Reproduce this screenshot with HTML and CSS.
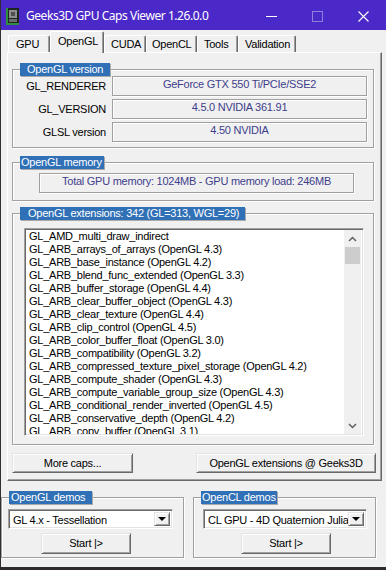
FILE: index.html
```html
<!DOCTYPE html>
<html lang="en">
<head>
  <meta charset="UTF-8">
  <title>Geeks3D GPU Caps Viewer 1.26.0.0</title>
  <link rel="stylesheet" href="styles.css">
</head>
<body>

<div class="window">

  <!-- Barra de titulo -->
  <div class="titlebar">
    <svg class="app-icon" width="13" height="17" viewBox="0 0 13 17">
      <rect x="0" y="0" width="13" height="17" fill="#1e2621"/>
      <rect x="0" y="0" width="2" height="17" fill="#2f8f3c"/>
      <rect x="0" y="15" width="13" height="2" fill="#2f8f3c"/>
      <rect x="3" y="2" width="8" height="8" fill="#8d8d8d"/>
      <rect x="5" y="4" width="4" height="4" fill="#4f4f4f"/>
      <rect x="3" y="11" width="8" height="3" fill="#6b6b6b"/>
    </svg>
    <span class="title">Geeks3D GPU Caps Viewer 1.26.0.0</span>
    <div class="controls">
      <div class="ctrl">
        <svg width="11" height="11" viewBox="0 0 11 11"><rect x="0" y="5" width="11" height="1" fill="#fff"/></svg>
      </div>
      <div class="ctrl">
        <svg width="11" height="11" viewBox="0 0 11 11"><rect x="0.5" y="0.5" width="10" height="10" fill="none" stroke="#8f7fdc"/></svg>
      </div>
      <div class="ctrl">
        <svg width="11" height="11" viewBox="0 0 11 11"><path d="M0.5 0.5 L10.5 10.5 M10.5 0.5 L0.5 10.5" stroke="#fff" stroke-width="1.1"/></svg>
      </div>
    </div>
  </div>

  <div class="client">

    <!-- Pestanas -->
    <div class="tabs">
      <div class="tab tab-gpu">GPU</div>
      <div class="tab tab-opengl active">OpenGL</div>
      <div class="tab tab-cuda">CUDA</div>
      <div class="tab tab-opencl">OpenCL</div>
      <div class="tab tab-tools">Tools</div>
      <div class="tab tab-validation">Validation</div>
    </div>

    <div class="panel">

      <fieldset class="group group-version">
        <legend class="lbl-version">OpenGL version</legend>
        <div class="row">
          <span class="key">GL_RENDERER</span>
          <span class="value">GeForce GTX 550 Ti/PCIe/SSE2</span>
        </div>
        <div class="row">
          <span class="key">GL_VERSION</span>
          <span class="value">4.5.0 NVIDIA 361.91</span>
        </div>
        <div class="row">
          <span class="key">GLSL version</span>
          <span class="value">4.50 NVIDIA</span>
        </div>
      </fieldset>

      <fieldset class="group group-memory">
        <legend class="lbl-memory">OpenGL memory</legend>
        <div class="value memory-value">Total GPU memory: 1024MB - GPU memory load: 246MB</div>
      </fieldset>

      <fieldset class="group group-ext">
        <legend class="lbl-ext">OpenGL extensions: 342 (GL=313, WGL=29)</legend>
        <div class="listbox">
          <ul class="ext-list">
            <li>GL_AMD_multi_draw_indirect</li>
            <li>GL_ARB_arrays_of_arrays (OpenGL 4.3)</li>
            <li>GL_ARB_base_instance (OpenGL 4.2)</li>
            <li>GL_ARB_blend_func_extended (OpenGL 3.3)</li>
            <li>GL_ARB_buffer_storage (OpenGL 4.4)</li>
            <li>GL_ARB_clear_buffer_object (OpenGL 4.3)</li>
            <li>GL_ARB_clear_texture (OpenGL 4.4)</li>
            <li>GL_ARB_clip_control (OpenGL 4.5)</li>
            <li>GL_ARB_color_buffer_float (OpenGL 3.0)</li>
            <li>GL_ARB_compatibility (OpenGL 3.2)</li>
            <li>GL_ARB_compressed_texture_pixel_storage (OpenGL 4.2)</li>
            <li>GL_ARB_compute_shader (OpenGL 4.3)</li>
            <li>GL_ARB_compute_variable_group_size (OpenGL 4.3)</li>
            <li>GL_ARB_conditional_render_inverted (OpenGL 4.5)</li>
            <li>GL_ARB_conservative_depth (OpenGL 4.2)</li>
            <li>GL_ARB_copy_buffer (OpenGL 3.1)</li>
          </ul>
          <div class="scrollbar">
            <div class="sb-arrow">
              <svg width="9" height="6" viewBox="0 0 9 6"><polyline points="1,5 4.5,1.5 8,5" fill="none" stroke="#606060" stroke-width="1.5"/></svg>
            </div>
            <div class="sb-thumb"></div>
            <div class="sb-track"></div>
            <div class="sb-arrow">
              <svg width="9" height="6" viewBox="0 0 9 6"><polyline points="1,1 4.5,4.5 8,1" fill="none" stroke="#606060" stroke-width="1.5"/></svg>
            </div>
          </div>
        </div>
      </fieldset>

      <div class="buttons">
        <div class="btn btn-caps">More caps...</div>
        <div class="btn btn-geeks">OpenGL extensions @ Geeks3D</div>
      </div>
    </div>

    <!-- Demos -->
    <div class="demos">
      <fieldset class="group demo demo-gl">
        <legend class="lbl-gl">OpenGL demos</legend>
        <div class="select">
          <span class="select-text">GL 4.x - Tessellation</span>
          <span class="select-btn"><span class="arrow-down"></span></span>
        </div>
        <div class="btn btn-start">Start |&gt;</div>
      </fieldset>
      <fieldset class="group demo demo-cl">
        <legend class="lbl-cl">OpenCL demos</legend>
        <div class="select">
          <span class="select-text">CL GPU - 4D Quaternion Julia</span>
          <span class="select-btn"><span class="arrow-down"></span></span>
        </div>
        <div class="btn btn-start">Start |&gt;</div>
      </fieldset>
    </div>

  </div>
</div>

</body>
</html>
```

FILE: styles.css
```css
* {
  box-sizing: border-box;
}

body {
  margin: 0;
  background: #2e2a2d;
  font-family: "Liberation Sans", Arial, sans-serif;
  font-size: 11px;
  letter-spacing: -0.25px;
  color: #000;
}

.window {
  width: 386px;
  height: 567px;
  background: #f0f0f0;
  border-left: 1px solid #352e31;
  overflow: hidden;
}

/* Barra de titulo */
.titlebar {
  height: 30px;
  background: #4b29c9;
  color: #fff;
  display: flex;
  align-items: center;
  padding-left: 5px;
}

.app-icon {
  flex: none;
  margin-top: 2px;
}

.title {
  margin-left: 7px;
  font-family: "Noto Sans", sans-serif;
  font-size: 12px;
  letter-spacing: -0.45px;
  margin-top: 1px;
}

.controls {
  margin-left: auto;
  display: flex;
  height: 100%;
}

.ctrl {
  width: 46px;
  display: flex;
  align-items: center;
  justify-content: center;
  padding-top: 2px;
}

/* Pestanas */
.tabs {
  display: flex;
  align-items: flex-end;
  height: 22px;
  padding-left: 7px;
}

.tab {
  height: 17px;
  line-height: 16px;
  padding-left: 6px;
  border: 1px solid #fff;
  border-bottom: 0;
  border-right-color: #696969;
  border-radius: 2px 2px 0 0;
  box-shadow: inset -1px 0 0 #a0a0a0;
  white-space: nowrap;
}

.tab.active {
  height: 22px;
  margin-bottom: -1px;
  line-height: 18px;
  padding-left: 7px;
  position: relative;
  z-index: 1;
  background: #f0f0f0;
}

.tab-gpu { width: 42px; padding-left: 7px; }
.tab-opengl { width: 54px; }
.tab-cuda { width: 42px; }
.tab-opencl { width: 51px; padding-left: 5px; }
.tab-tools { width: 41px; }
.tab-validation { width: 58px; }

.panel {
  margin-left: 6px;
  width: 375px;
  height: 429px;
  border: 1px solid #fff;
  border-right-color: #696969;
  border-bottom-color: #696969;
  box-shadow: inset -1px -1px 0 #a0a0a0;
  padding: 10px 7px 0 4px;
}

/* Cuadros de grupo */
.group {
  margin: 0;
  padding: 0 6px;
  min-width: 0;
  border: 1px solid #a0a0a0;
  box-shadow: inset 1px 1px 0 #fff, 1px 1px 0 #fff;
}

.group legend {
  margin-left: 1px;
  padding: 0 7px;
  line-height: 13px;
  background: #3070b6;
  color: #fff;
  box-shadow: 1px 1px 0 #a9a9a9;
  white-space: nowrap;
}

.group .lbl-memory { padding: 0 2px 0 1px; }
.group .lbl-ext { padding: 0 6px 0 8px; }
.group .lbl-gl { padding: 0 7px 0 2px; }
.group .lbl-cl { padding: 0 1px; }

.group-version {
  padding-bottom: 5px;
}

.row {
  display: flex;
  height: 20px;
  margin-top: 3px;
}

.row:first-of-type {
  margin-top: 0;
}

.key {
  width: 93px;
  padding-right: 6px;
  text-align: right;
  line-height: 20px;
}

.value {
  width: 255px;
  height: 20px;
  border: 1px solid #a0a0a0;
  box-shadow: inset 1px 1px 0 #fff, 1px 1px 0 #fff;
  text-align: center;
  line-height: 15px;
  color: #3e3e8c;
}

.group-memory {
  margin-top: 8px;
  padding-bottom: 7px;
}

.memory-value {
  width: 315px;
  margin: 4px 0 0 20px;
}

.group-ext {
  margin-top: 6px;
  padding-bottom: 8px;
}

/* Lista de extensiones */
.listbox {
  display: flex;
  width: 340px;
  height: 208px;
  margin: 8px 0 0 5px;
  background: #fff;
  border: 1px solid;
  border-color: #a0a0a0 #fff #fff #a0a0a0;
  box-shadow: inset 1px 1px 0 #696969, inset -1px -1px 0 #e3e3e3;
  padding: 1px 2px 1px 1px;
}

.ext-list {
  flex: 1;
  list-style: none;
  margin: 0;
  padding: 0 0 0 3px;
  overflow: hidden;
  line-height: 13px;
  white-space: nowrap;
}

.scrollbar {
  width: 17px;
  display: flex;
  flex-direction: column;
  background: #f0f0f0;
}

.sb-arrow {
  height: 17px;
  display: flex;
  align-items: center;
  justify-content: center;
}

.sb-thumb {
  height: 17px;
  margin: 0 1px;
  background: #cdcdcd;
}

.sb-track {
  flex: 1;
}

/* Botones */
.buttons {
  display: flex;
  margin-top: 8px;
  margin-right: -2px;
}

.btn {
  height: 20px;
  background: #f0f0f0;
  border: 1px solid;
  border-color: #e3e3e3 #696969 #696969 #e3e3e3;
  box-shadow: inset 1px 1px 0 #fff, inset -1px -1px 0 #a0a0a0;
  text-align: center;
  line-height: 18px;
}

.btn-caps { width: 121px; }
.btn-geeks { width: 180px; margin-left: auto; }

/* Demos */
.demos {
  display: flex;
  gap: 9px;
  margin-top: 10px;
}

.demo {
  width: 183px;
  padding-bottom: 3px;
}

.select {
  display: flex;
  height: 20px;
  margin-top: 5px;
  background: #fff;
  border: 1px solid;
  border-color: #a0a0a0 #fff #fff #a0a0a0;
  box-shadow: inset 1px 1px 0 #696969, inset -1px -1px 0 #e3e3e3;
  padding: 2px;
}

.select-text {
  flex: 1;
  padding-left: 2px;
  line-height: 16px;
  overflow: hidden;
  white-space: nowrap;
}

.select-btn {
  width: 16px;
  flex: none;
  display: flex;
  align-items: center;
  justify-content: center;
  background: #f0f0f0;
  border: 1px solid;
  border-color: #e3e3e3 #696969 #696969 #e3e3e3;
  box-shadow: inset 1px 1px 0 #fff, inset -1px -1px 0 #a0a0a0;
}

.arrow-down {
  width: 0;
  height: 0;
  border-left: 4px solid transparent;
  border-right: 4px solid transparent;
  border-top: 4px solid #000;
}

.demo-gl .select { width: 165px; margin-left: 0; }
.demo-cl .select { width: 164px; margin-left: 3px; }

.btn-start {
  width: 90px;
  height: 21px;
  margin-top: 4px;
  line-height: 19px;
}

.demo-gl .btn-start { margin-left: 33px; }
.demo-cl .btn-start { margin-left: 41px; }
```
